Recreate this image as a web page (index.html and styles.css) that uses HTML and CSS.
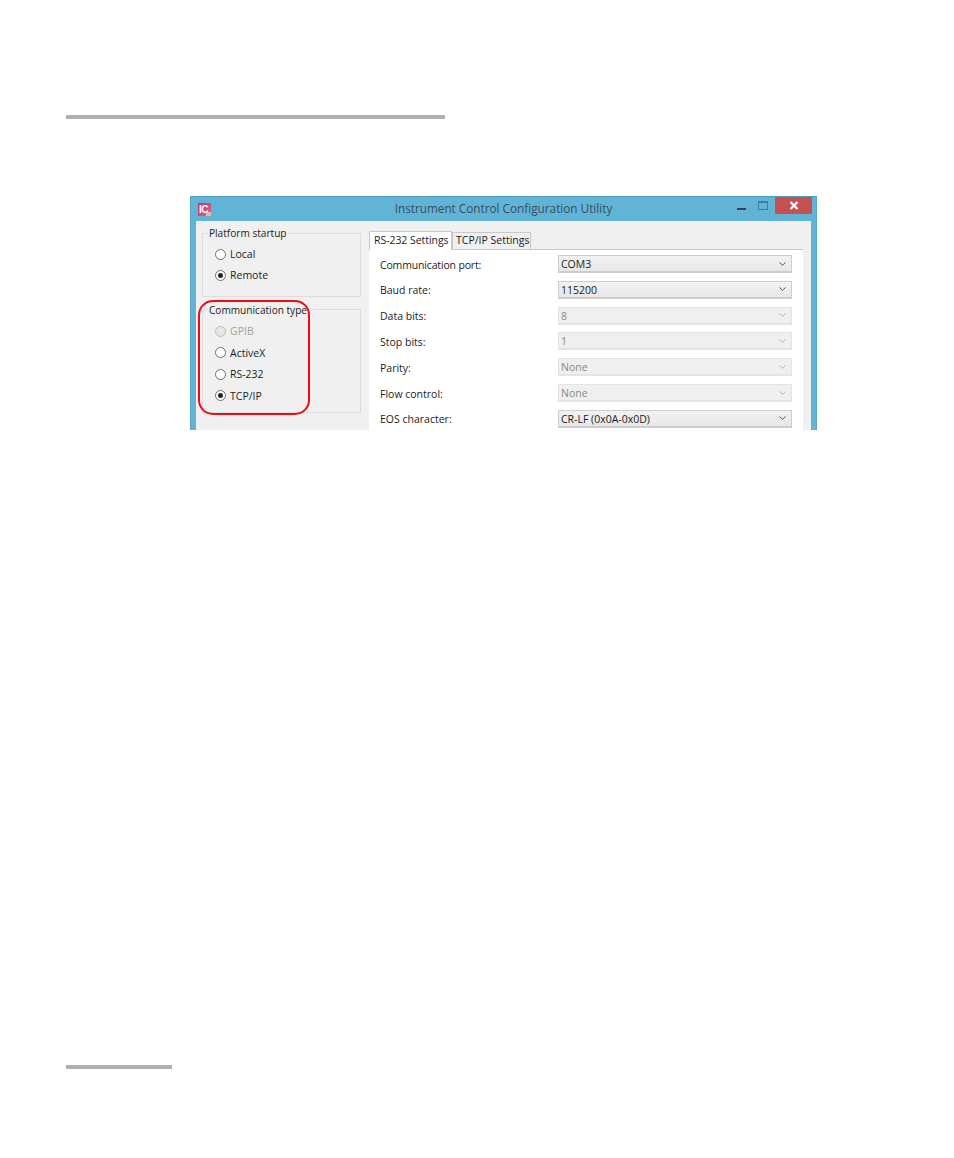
FILE: index.html
```html
<!DOCTYPE html>
<html lang="en">
<head>
<meta charset="utf-8">
<title>Instrument Control Configuration Utility</title>
<link rel="stylesheet" href="styles.css">
</head>
<body>
<div class="page">
  <div class="rule rule-top"></div>
  <section class="window">
    <header class="titlebar">
      <span class="app-icon">IC</span>
      <span class="title">Instrument Control Configuration Utility</span>
      <div class="controls">
        <span class="min"></span>
        <span class="max"></span>
        <span class="close">
          <svg width="10" height="9" viewBox="0 0 10 9"><path d="M1.5 1 8.500 8M8.500 1 1.500 8" stroke="#fff" stroke-width="2.200" fill="none"/></svg>
        </span>
      </div>
    </header>
    <div class="body">
      <aside class="side">
        <div class="group group-platform">
          <div class="legend">Platform startup</div>
          <div class="radios">
            <div class="radio"><span class="dot"></span>Local</div>
            <div class="radio"><span class="dot on"></span>Remote</div>
          </div>
        </div>
        <div class="group group-comm">
          <div class="legend">Communication type</div>
          <div class="radios">
            <div class="radio off"><span class="dot"></span>GPIB</div>
            <div class="radio"><span class="dot"></span>ActiveX</div>
            <div class="radio"><span class="dot"></span>RS-232</div>
            <div class="radio"><span class="dot on"></span>TCP/IP</div>
          </div>
        </div>
      </aside>
      <main class="tabs">
        <div class="tabstrip">
          <div class="tab active">RS-232 Settings</div>
          <div class="tab">TCP/IP Settings</div>
        </div>
        <div class="panel">
          <div class="row"><label class="tight">Communication port:</label><div class="select"><span>COM3</span><svg class="chev" width="7" height="4" viewBox="0 0 7 4"><path d="M.5.5 3.500 3.300 6.500.5" fill="none" stroke="currentColor"/></svg></div></div>
          <div class="row"><label>Baud rate:</label><div class="select"><span>115200</span><svg class="chev" width="7" height="4" viewBox="0 0 7 4"><path d="M.5.5 3.500 3.300 6.500.5" fill="none" stroke="currentColor"/></svg></div></div>
          <div class="row"><label>Data bits:</label><div class="select off"><span>8</span><svg class="chev" width="7" height="4" viewBox="0 0 7 4"><path d="M.5.5 3.500 3.300 6.500.5" fill="none" stroke="currentColor"/></svg></div></div>
          <div class="row"><label>Stop bits:</label><div class="select off"><span>1</span><svg class="chev" width="7" height="4" viewBox="0 0 7 4"><path d="M.5.5 3.500 3.300 6.500.5" fill="none" stroke="currentColor"/></svg></div></div>
          <div class="row"><label>Parity:</label><div class="select off"><span>None</span><svg class="chev" width="7" height="4" viewBox="0 0 7 4"><path d="M.5.5 3.500 3.300 6.500.5" fill="none" stroke="currentColor"/></svg></div></div>
          <div class="row"><label>Flow control:</label><div class="select off"><span>None</span><svg class="chev" width="7" height="4" viewBox="0 0 7 4"><path d="M.5.5 3.500 3.300 6.500.5" fill="none" stroke="currentColor"/></svg></div></div>
          <div class="row"><label>EOS character:</label><div class="select"><span>CR-LF (0x0A-0x0D)</span><svg class="chev" width="7" height="4" viewBox="0 0 7 4"><path d="M.5.5 3.500 3.300 6.500.5" fill="none" stroke="currentColor"/></svg></div></div>
        </div>
      </main>
      <div class="callout"></div>
    </div>
  </section>
  <div class="rule rule-bottom"></div>
</div>
</body>
</html>
```
FILE: styles.css
```css
* { box-sizing: border-box; }
html, body { margin: 0; background: #fff; }
body { font-family: "Open Sans", "Noto Sans", sans-serif; color: #1c1c1c; }
.page { width: 954px; height: 1158px; padding: 115px 0 0 66px; }
.rule { height: 4px; background: #b0b0b0; }
.rule-top { width: 379px; }
.rule-bottom { width: 106px; margin-top: 635px; }

.window {
  width: 627px; height: 234px; margin: 77px 0 0 124px;
  background: #62b4d6; border-top: 1px solid #4f9cbd; border-left: 1px solid #58a7c8; border-right: 1px solid #58a7c8;
  display: flex; flex-direction: column; overflow: hidden;
}
.titlebar { height: 24px; flex: none; display: flex; align-items: center; position: relative; padding-left: 7px; }
.app-icon {
  width: 13px; height: 13px; margin-top: 1px; position: relative;
  background: linear-gradient(135deg, #c22f72, #dc6a8c);
  color: #fff; font: bold 10px/13px "Liberation Sans", sans-serif; letter-spacing: -.5px; text-align: left; padding-left: 1px;
}
.app-icon::after { content: ""; position: absolute; right: 0; bottom: 0; width: 5px; height: 4px; background: #e9b9a0; }
.title { flex: 1; text-align: center; font-size: 11.750px; line-height: 16px; margin-top: -2px; color: #34505e; padding-right: 20px; }
.controls { position: absolute; right: 4px; top: 0; height: 17px; display: flex; }
.min { width: 9px; height: 2px; background: #2f4652; margin: 11px 12px 0 0; }
.max { width: 10px; height: 9px; border: 1px solid #3d7f9c; border-top-width: 2px; margin: 4px 7px 0 0; }
.close { width: 37px; height: 17px; background: #c75050; display: flex; align-items: center; justify-content: center; }

.body { flex: 1; margin: 0 5px; background: #f0f0f0; display: flex; position: relative; min-height: 0; }
.side { width: 173px; flex: none; padding: 12px 0 0 6px; display: flex; flex-direction: column; gap: 12px; }
.group { width: 159px; border: 1px solid #dcdcdc; }
.group-platform { height: 64px; }
.group-comm { height: 104px; }
.legend { width: fit-content; margin: -8px 0 0 5px; padding: 0 1px; background: #f0f0f0; font-size: 10.100px; line-height: 14px; }
.group-comm .legend { margin-top: -7px; }
.radios { padding: 7px 0 0 12px; display: flex; flex-direction: column; gap: 7.500px; }
.group-platform .radios { gap: 7px; }
.radio { height: 14px; display: flex; align-items: center; gap: 4px; font-size: 10.500px; line-height: 14px; }
.radio.off { color: #a0a0a0; }
.dot { width: 11px; height: 11px; border-radius: 50%; border: 1px solid #707070; background: #fff; display: flex; align-items: center; justify-content: center; flex: none; }
.dot.on::after { content: ""; width: 5px; height: 5px; border-radius: 50%; background: #222; }
.radio.off .dot { border-color: #bdbdbd; background: #e6e6e6; }

.tabs { width: 434px; flex: none; display: flex; flex-direction: column; padding-top: 9px; }
.tabstrip { display: flex; align-items: flex-end; height: 19px; flex: none; position: relative; }
.tab { height: 17px; border: 1px solid #c8c8c8; border-bottom: 0; padding: 0 3px; font-size: 10.500px; line-height: 15px; background: #f0f0f0; width: 79px; white-space: nowrap; }
.tab.active { height: 19px; width: 83px; background: #fff; line-height: 16px; padding-left: 4px; margin-bottom: -1px; border-bottom: 0; position: relative; z-index: 1; letter-spacing: -.05px; }
.panel { flex: 1; background: #fff; border-top: 1px solid #c8c8c8; padding: 5px 11px 0 11px; display: flex; flex-direction: column; gap: 7.830px; }
.row { height: 18px; flex: none; display: flex; align-items: center; justify-content: space-between; }
.row label { font-size: 10.500px; padding-top: 1px; }
.row label.tight { letter-spacing: -.16px; }
.select { width: 234px; height: 18px; border: 1px solid #cdcdcd; border-width: 1px 1px 2px 1px; background: linear-gradient(#f2f2f2, #e7e7e7); display: flex; align-items: center; justify-content: space-between; padding: 0 5px 0 2px; font-size: 10.500px; color: #1c1c1c; }
.select span { padding-top: 1px; }
.select.off { background: #efefef; border-color: #e4e4e4; color: #8a8a8a; }
.chev { color: #555; }
.select.off .chev { color: #b4b4b4; }

.callout { position: absolute; left: 2px; top: 79px; width: 112px; height: 115px; border: 2px solid #f20a14; border-radius: 15px; }
```
